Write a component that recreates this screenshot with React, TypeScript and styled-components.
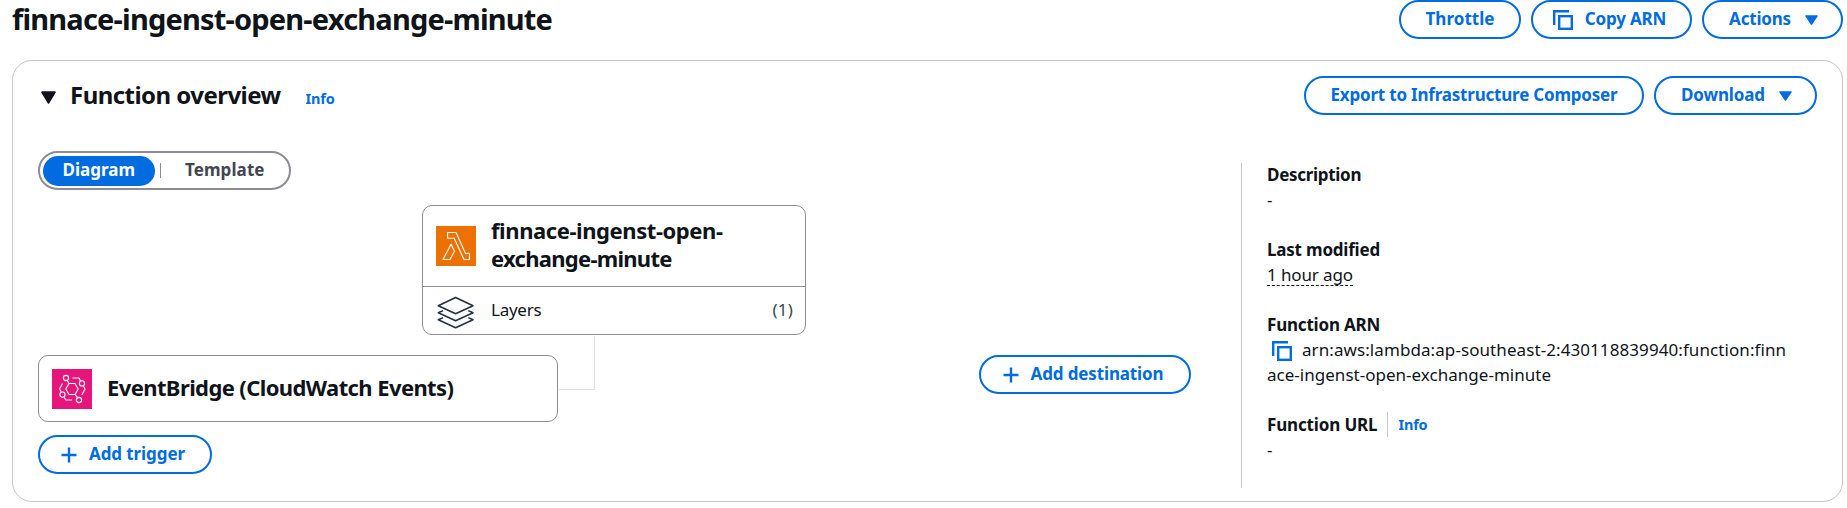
import React from "react";
import styled, { createGlobalStyle, css } from "styled-components";

const color = {
  text: "#0f141a",
  accent: "#006ce0",
  outline: "#8c8c94",
  divider: "#c6c6cd",
  muted: "#424650",
};

const GlobalStyle = createGlobalStyle`
  *, *::before, *::after { box-sizing: border-box; }
  body {
    margin: 0;
    background: #fff;
    color: ${color.text};
    font: 400 17px/25px "Noto Sans", "Open Sans", sans-serif;
    overflow: hidden;
  }
  svg { display: block; flex: none; }
`;

const tracked = css<{ $track?: number }>`
  letter-spacing: ${(p) => p.$track ?? 0}px;
`;

const Page = styled.main`
  height: 508px;
  padding: 0 4px 0 12px;
`;

const PageHeader = styled.header`
  display: flex;
  justify-content: space-between;
  height: 39px;
`;

const PageTitle = styled.h1`
  margin: 0;
  font-size: 29px;
  line-height: 38px;
  font-weight: 700;
  letter-spacing: -0.81px;
`;

const ButtonGroup = styled.div`
  display: flex;
  gap: 10px;
`;

const buttonPadding = {
  plain: "0 0 2px",
  leading: "0 4px 2px 0",
  trailing: "0 0 2px 2px",
};

const Button = styled.button<{ $width: number; $track?: number; $icon?: keyof typeof buttonPadding }>`
  display: flex;
  align-items: center;
  justify-content: center;
  gap: ${(p) => (p.$icon === "trailing" ? 14 : 12)}px;
  width: ${(p) => p.$width}px;
  height: 39px;
  padding: ${(p) => buttonPadding[p.$icon ?? "plain"]};
  border: 2px solid ${color.accent};
  border-radius: 20px;
  background: #fff;
  color: ${color.accent};
  font: inherit;
  font-weight: 700;
  white-space: nowrap;
  ${tracked}

  svg { margin-top: 3px; }
`;

const Panel = styled.section`
  height: 442px;
  margin-top: 21px;
  padding: 15px 25px 0;
  border: 1px solid ${color.divider};
  border-radius: 20px;
`;

const PanelHeader = styled.div`
  display: flex;
  justify-content: space-between;
`;

const PanelHeading = styled.div`
  display: flex;
  align-items: baseline;
  padding-left: 3px;

  svg { margin-bottom: 2px; }
`;

const PanelTitle = styled.h2`
  margin: 0 25px 0 14px;
  font-size: 24px;
  line-height: 37px;
  font-weight: 700;
  letter-spacing: -0.54px;
`;

const InfoLink = styled.a`
  color: ${color.accent};
  font-size: 14.5px;
  font-weight: 700;
  letter-spacing: -0.2px;
`;

const PanelBody = styled.div`
  display: flex;
  margin-top: 36px;
`;

const Designer = styled.div`
  width: 1203px;
`;

const Segments = styled.div`
  display: flex;
  align-items: center;
  width: 253px;
  height: 39px;
  padding-left: 3px;
  border: 2px solid ${color.outline};
  border-radius: 20px;
`;

const Segment = styled.button<{ $active?: boolean; $width: number; $track?: number }>`
  width: ${(p) => p.$width}px;
  height: 30px;
  padding: 0 0 3px;
  border: 0;
  border-radius: 15px;
  background: ${(p) => (p.$active ? color.accent : "transparent")};
  color: ${(p) => (p.$active ? "#fff" : color.muted)};
  font: inherit;
  font-weight: 700;
  ${tracked}
`;

const SegmentDivider = styled.span`
  width: 1px;
  height: 15px;
  margin-left: 5px;
  background: ${color.outline};
`;

const FunctionNode = styled.div`
  width: 384px;
  height: 130px;
  margin: 15px 0 0 384px;
  border: 1px solid ${color.outline};
  border-radius: 10px;
`;

const FunctionHead = styled.div`
  display: flex;
  align-items: center;
  gap: 15px;
  height: 81px;
  padding-left: 13px;
  border-bottom: 1px solid ${color.outline};
`;

const NodeTitle = styled.div`
  padding-bottom: 4px;
  font-size: 22px;
  line-height: 28px;
  font-weight: 700;
  white-space: nowrap;
`;

const TitleLine = styled.span<{ $track?: number }>`
  display: block;
  ${tracked}
`;

const LayersRow = styled.div`
  display: flex;
  align-items: center;
  height: 47px;
  padding: 0 12px 0 14px;

  svg { margin-top: 4px; }
`;

const LayersLabel = styled.span`
  flex: 1;
  margin-left: 16px;
  padding-bottom: 2px;
  letter-spacing: -0.25px;
`;

const LayersCount = styled.span`
  padding-bottom: 2px;
  color: ${color.muted};
  letter-spacing: 0.2px;
`;

const FlowRow = styled.div`
  display: flex;
  align-items: flex-start;
  margin-top: 20px;
`;

const Triggers = styled.div`
  display: flex;
  flex-direction: column;
  gap: 13px;
`;

const TriggerNode = styled.div`
  display: flex;
  align-items: center;
  gap: 15px;
  width: 520px;
  height: 67px;
  padding-left: 13px;
  border: 1px solid ${color.outline};
  border-radius: 10px;
`;

const Connector = styled.div`
  width: 36px;
  height: 54px;
  margin: -19px 0 0 1px;
  border: solid #dedee3;
  border-width: 0 1px 1px 0;
`;

const Destinations = styled.div`
  margin: 0 50px 0 auto;
`;

const Details = styled.dl`
  height: 325px;
  margin: 12px 0 0;
  padding-left: 25px;
  border-left: 1px solid ${color.divider};
`;

const Detail = styled.div`
  margin-bottom: 25px;
  &:first-child { margin-top: -1px; }
`;

const Term = styled.dt<{ $track?: number }>`
  display: flex;
  font-weight: 700;
  ${tracked}
`;

const Value = styled.dd<{ $track?: number }>`
  display: flex;
  height: 25px;
  margin: 0;
  white-space: nowrap;
  ${tracked}
`;

const Timestamp = styled.span`
  height: 24px;
  border-bottom: 1px dashed ${color.text};
`;

const CopySlot = styled.span`
  display: flex;
  align-items: center;
  width: 35px;
  padding: 3px 0 0 5px;
`;

const TermInfo = styled.span`
  display: flex;
  height: 25px;
  margin-left: 10px;
  padding-left: 10px;
  border-left: 1px solid ${color.divider};
`;

const Caret = ({ width = 13, height = 10 }: { width?: number; height?: number }) => (
  <svg width={width} height={height} viewBox="0 0 13 11" preserveAspectRatio="none">
    <path d="M1 1H12L6.5 10Z" fill="currentColor" stroke="currentColor" strokeWidth="1.6" strokeLinejoin="round" />
  </svg>
);

const CopyIcon = () => (
  <svg width="20" height="20" viewBox="0 0 20 20" fill="none" stroke={color.accent} strokeWidth="2.4">
    <path d="M1.2 15V1.2H16" />
    <rect x="6.2" y="6.2" width="12.6" height="12.6" />
  </svg>
);

const PlusIcon = () => (
  <svg width="16" height="16" viewBox="0 0 16 16" stroke={color.accent} strokeWidth="2.4">
    <path d="M8 0.5V15.5M0.5 8H15.5" />
  </svg>
);

const LambdaIcon = () => (
  <svg width="40" height="40" viewBox="0 0 40 40">
    <rect width="40" height="40" fill="#ed7100" />
    <g fill="none" stroke="#fff" strokeWidth="1.1" strokeLinejoin="round">
      <path d="M11.6 6.5H20L29.6 27.8L32.2 27.2L33.5 27.5V33.5H28L18.2 12.3H11.6Z" />
      <path d="M15 18.3L18.5 25.2L14 33.5H7Z" />
    </g>
  </svg>
);

const EventBridgeIcon = () => (
  <svg width="40" height="40" viewBox="0 0 40 40">
    <rect width="40" height="40" fill="#e7157b" />
    <g fill="none" stroke="#fff" strokeWidth="1.1" strokeLinejoin="round">
      <circle cx="14" cy="9" r="2.6" />
      <circle cx="30" cy="14.4" r="2.6" />
      <circle cx="10.5" cy="25.6" r="2.6" />
      <circle cx="27" cy="31" r="2.6" />
      <path d="M17 14.5H23L26.2 20L23 25.5H17L13.8 20Z" />
      <path d="M15.3 11.5L17 14.5M23 25.5L25.5 28.6" />
      <path d="M20.3 9H27L28.6 12M31.4 17L33 20L29.8 26" />
      <path d="M10.5 14.5L7.5 20L9.3 23M12 28L13.8 31H20" />
    </g>
  </svg>
);

const LayersIcon = () => (
  <svg width="38" height="34" viewBox="0 0 38 34" fill="none" stroke="#232f3e" strokeWidth="1.5" strokeLinejoin="round">
    <path d="M18.6 1.5L36 9.7L18.6 17.7L1.3 9.7Z" />
    <path d="M6 14.6L1.3 16.7L18.6 24.7L36 16.7L31.3 14.6" />
    <path d="M6 21.6L1.3 23.7L18.6 31.7L36 23.7L31.3 21.6" />
  </svg>
);

export default function App() {
  return (
    <Page>
      <GlobalStyle />
      <PageHeader>
        <PageTitle>finnace-ingenst-open-exchange-minute</PageTitle>
        <ButtonGroup>
          <Button $width={122} $track={0.05}>Throttle</Button>
          <Button $width={161} $track={-0.15} $icon="leading"><CopyIcon />Copy ARN</Button>
          <Button $width={141} $track={-0.2} $icon="trailing">Actions<Caret /></Button>
        </ButtonGroup>
      </PageHeader>

      <Panel>
        <PanelHeader>
          <PanelHeading>
            <Caret width={15} height={13} />
            <PanelTitle>Function overview</PanelTitle>
            <InfoLink>Info</InfoLink>
          </PanelHeading>
          <ButtonGroup>
            <Button $width={340} $track={-0.2}>Export to Infrastructure Composer</Button>
            <Button $width={163} $track={-0.12} $icon="trailing">Download<Caret /></Button>
          </ButtonGroup>
        </PanelHeader>

        <PanelBody>
          <Designer>
            <Segments>
              <Segment $active $width={113}>Diagram</Segment>
              <SegmentDivider />
              <Segment $width={130} $track={0.1}>Template</Segment>
            </Segments>

            <FunctionNode>
              <FunctionHead>
                <LambdaIcon />
                <NodeTitle>
                  <TitleLine $track={-0.42}>finnace-ingenst-open-</TitleLine>
                  <TitleLine $track={-0.72}>exchange-minute</TitleLine>
                </NodeTitle>
              </FunctionHead>
              <LayersRow>
                <LayersIcon />
                <LayersLabel>Layers</LayersLabel>
                <LayersCount>(1)</LayersCount>
              </LayersRow>
            </FunctionNode>

            <FlowRow>
              <Triggers>
                <TriggerNode>
                  <EventBridgeIcon />
                  <NodeTitle>
                    <TitleLine $track={-0.6}>EventBridge (CloudWatch Events)</TitleLine>
                  </NodeTitle>
                </TriggerNode>
                <Button $width={174} $track={-0.1} $icon="leading"><PlusIcon />Add trigger</Button>
              </Triggers>
              <Connector />
              <Destinations>
                <Button $width={212} $track={-0.14} $icon="leading"><PlusIcon />Add destination</Button>
              </Destinations>
            </FlowRow>
          </Designer>

          <Details>
            <Detail>
              <Term $track={-0.3}>Description</Term>
              <Value>-</Value>
            </Detail>
            <Detail>
              <Term $track={-0.2}>Last modified</Term>
              <Value $track={-0.12}><Timestamp>1 hour ago</Timestamp></Value>
            </Detail>
            <Detail>
              <Term $track={-0.2}>Function ARN</Term>
              <Value $track={0.08}>
                <CopySlot><CopyIcon /></CopySlot>
                arn:aws:lambda:ap-southeast-2:430118839940:function:finn
              </Value>
              <Value $track={0.02}>ace-ingenst-open-exchange-minute</Value>
            </Detail>
            <Detail>
              <Term $track={-0.15}>
                Function URL
                <TermInfo><InfoLink>Info</InfoLink></TermInfo>
              </Term>
              <Value>-</Value>
            </Detail>
          </Details>
        </PanelBody>
      </Panel>
    </Page>
  );
}
